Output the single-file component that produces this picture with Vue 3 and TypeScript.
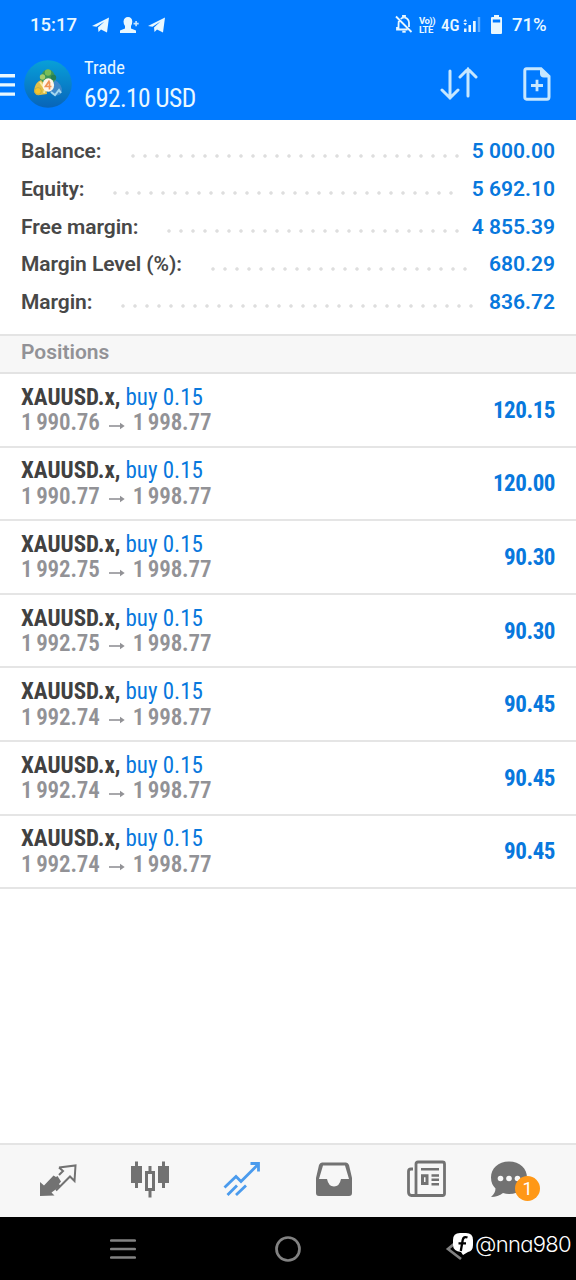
<script setup lang="ts">
type AccountRow = {
  label: string;
  value: string;
  dots: number;
};

type Position = {
  symbol: string;
  side: string;
  open: string;
  current: string;
  profit: string;
};

const DOT_STEP = 12;

const account: AccountRow[] = [
  { label: "Balance:", value: "5 000.00", dots: 28 },
  { label: "Equity:", value: "5 692.10", dots: 29 },
  { label: "Free margin:", value: "4 855.39", dots: 25 },
  { label: "Margin Level (%):", value: "680.29", dots: 22 },
  { label: "Margin:", value: "836.72", dots: 30 },
];

const makePosition = (open: string, profit: string): Position => ({
  symbol: "XAUUSD.x,",
  side: "buy 0.15",
  open,
  current: "1 998.77",
  profit,
});

const positions: Position[] = [
  makePosition("1 990.76", "120.15"),
  makePosition("1 990.77", "120.00"),
  makePosition("1 992.75", "90.30"),
  makePosition("1 992.75", "90.30"),
  makePosition("1 992.74", "90.45"),
  makePosition("1 992.74", "90.45"),
  makePosition("1 992.74", "90.45"),
];
</script>

<template>
  <div class="screen">
    <header class="top">
      <div class="status">
        <span class="clock">15:17</span>
        <svg class="status-left" width="76" height="18" viewBox="0 0 76 18">
          <path d="M0 10 17 1.5 15 16.5 9 13.5 6.5 16 6 11.5 12.5 5.5 4.5 10.8Z" />
          <path d="M28 17V14.5L33 12.5V10Q31.5 8 31.5 5.5 32 1 36 1 40 1 40.3 5.5 40.3 8 39 10V12.5L44 14.5V17Z" />
          <path d="M41.5 6.8H43.3V5H44.9V6.8H46.7V8.4H44.9V10.2H43.3V8.4H41.5Z" opacity=".85" />
          <path d="M56 10 73 1.5 71 16.5 65 13.5 62.5 16 62 11.5 68.5 5.5 60.5 10.8Z" />
        </svg>
        <div class="status-right">
          <svg class="bell" width="18" height="19" viewBox="0 0 18 19" fill="none" stroke="currentColor" stroke-width="1.8">
            <path d="M1 1.5 16.5 17M3.8 6Q3.5 8 3.5 13H2V14.5H12.5M5.8 4Q7 2.7 8 2.6V1H10V2.6Q13.5 3.5 14 7.5V12" />
            <path d="M7.3 16.7H10.7" stroke-width="2" />
          </svg>
          <span class="volte"><b>Vo))</b><b>LTE</b></span>
          <span class="net">4G</span>
          <svg class="signal" width="18" height="17" viewBox="0 0 18 17">
            <path d="M.3 5.5 2.2 3 4.1 5.5ZM.3 7 2.2 9.5 4.1 7ZM1 12.5H3.5V16H1ZM5.5 9H8V16H5.5ZM10 5H12.7V16H10Z" />
            <path d="M14.8 1H17.2V16H14.8Z" opacity=".4" />
          </svg>
          <svg class="battery" width="11" height="19" viewBox="0 0 11 19">
            <path fill-rule="evenodd" d="M3 0H8V2H10Q11 2 11 3V18Q11 19 10 19H1Q0 19 0 18V3Q0 2 1 2H3ZM1.8 4.5V7.5H9.2V4.5Z" />
          </svg>
          <span class="percent">71%</span>
        </div>
      </div>

      <div class="toolbar">
        <svg class="burger" width="15" height="22" viewBox="0 0 15 22">
          <path d="M0 0H15V3.4H0ZM0 9.2H15V12.6H0ZM0 18.4H15V21.8H0Z" />
        </svg>
        <svg class="logo" width="48" height="48" viewBox="0 0 48 48">
          <defs>
            <linearGradient id="sea" x1="0" y1="0" x2="0" y2="1">
              <stop offset="0" stop-color="#08a0d8" />
              <stop offset=".55" stop-color="#087fc8" />
              <stop offset="1" stop-color="#0864b8" />
            </linearGradient>
          </defs>
          <circle cx="24" cy="24" r="23.8" fill="url(#sea)" />
          <path d="M16 20Q17 10 24 9.5 31 10 32 20L28 24H20Z" fill="#3b9657" />
          <circle cx="24" cy="12.5" r="3.2" fill="#78bd58" />
          <circle cx="18.5" cy="17" r="2.7" fill="#a5cc6b" />
          <circle cx="29.5" cy="17.5" r="2.7" fill="#267e53" />
          <path d="M17 20Q11 22 10 31 11 36 16 35L23 34 22 26Z" fill="#e2bf47" />
          <circle cx="14" cy="31" r="3.4" fill="#f4c42e" stroke="#a7a052" stroke-width=".6" />
          <path d="M16 22 21 29 20 33" fill="none" stroke="#f5e99c" stroke-width="2" />
          <path d="M31 20Q38 24 38 31 36 37 29 35L25 31Z" fill="#3f88ca" />
          <path d="M27 32 31 35 35 30 37 33" fill="none" stroke="#a3d7f0" stroke-width="2" />
          <ellipse cx="24.3" cy="25" rx="5.8" ry="6.8" fill="#fff5e8" />
          <path d="M25.5 20.5 21.5 26.5H27.5M25.5 22V29.5" fill="none" stroke="#f09355" stroke-width="1.7" />
        </svg>
        <div class="heading">
          <span class="title">Trade</span>
          <span class="total">692.10 USD</span>
        </div>
        <svg class="sort" width="38" height="34" viewBox="0 0 38 34">
          <path d="M10 4V31M2 23 10 31 18 23M28 29V2M20 10 28 2 36 10" />
        </svg>
        <svg class="new-order" width="28" height="34" viewBox="0 0 28 34">
          <path d="M3.5 1.8H18L26 9.5V30Q26 32.2 24 32.2H3.5Q1.8 32.2 1.8 30V4Q1.8 1.8 3.5 1.8Z" fill="none" stroke="currentColor" stroke-width="3" />
          <path d="M17 1 27 10.5H21Q17 10.5 17 6.5Z" fill="currentColor" />
          <path d="M8 18.5H20M14 12.7V24.3" fill="none" stroke="currentColor" stroke-width="2.8" />
        </svg>
      </div>
    </header>

    <section class="account">
      <div v-for="row in account" :key="row.label" class="account-row">
        <span class="label">{{ row.label }}</span>
        <i class="dots" :style="{ width: `${row.dots * DOT_STEP}px` }"></i>
        <span class="amount">{{ row.value }}</span>
      </div>
    </section>

    <h2 class="section-title">Positions</h2>

    <main class="positions">
      <article v-for="(item, index) in positions" :key="index" class="position">
        <div class="details">
          <div class="deal"><strong>{{ item.symbol }}</strong><span>{{ item.side }}</span></div>
          <div class="prices">
            <span>{{ item.open }}</span>
            <svg width="16" height="8" viewBox="0 0 16 8"><path d="M0 4H13" /><path class="head" d="M11 .8 15.7 4 11 7.2Z" /></svg>
            <span>{{ item.current }}</span>
          </div>
        </div>
        <span class="profit">{{ item.profit }}</span>
      </article>
    </main>

    <nav class="tabs">
      <div class="tab">
        <svg width="40" height="40" viewBox="0 0 40 40">
          <path d="M2 22 6 25.5 15.5 15.5 18 17 19.5 16 23 21.5 21 24 22.5 26 13.5 32.5 16.5 35.5 2 36Z" fill="currentColor" />
          <path d="M21 7.5 37.5 5.5 36.5 21 32 16.5 18 30.5M21 7.5 25 11 21 15" fill="none" stroke="currentColor" stroke-width="2" />
        </svg>
      </div>
      <div class="tab">
        <svg width="40" height="40" viewBox="0 0 40 40">
          <path d="M1 6H5V1.5H8V6H12V23H8V28H5V23H1ZM28 6H32V1.5H35V6H39V23H35V28H32V23H28Z" fill="currentColor" />
          <path d="M16.5 12.5H23.5V29.5H16.5Z" fill="none" stroke="currentColor" stroke-width="3" />
          <path d="M20 6V12M20 30V37.5" stroke="currentColor" stroke-width="3" />
        </svg>
      </div>
      <div class="tab active">
        <svg width="40" height="40" viewBox="0 0 40 40" fill="none" stroke="currentColor" stroke-width="2.8">
          <path d="M2.5 27.5 14 16.5 19 21.5 36 4.5M28.5 3.5H36.5V11.5M5.5 35 15 25.5M14 35 24 25.5" />
        </svg>
      </div>
      <div class="tab inbox">
        <svg width="40" height="40" viewBox="0 0 40 40">
          <path fill-rule="evenodd" d="M8 2.5H32Q34 2.5 35 5L38 18V33Q38 36 35 36H5Q2 36 2 33V18L5 5Q6 2.5 8 2.5ZM9 5.5 5 19H13Q14.5 26.5 20 26.5T27 19H35L31 5.5Z" fill="currentColor" />
        </svg>
      </div>
      <div class="tab">
        <svg width="40" height="40" viewBox="0 0 40 40" fill="none" stroke="currentColor">
          <path d="M9 35.5V4Q9 2 11 2H35.5Q37.5 2 37.5 4V33.5Q37.5 35.5 35.5 35.5H4.5Q1.5 35.5 1.5 32V11.5Q1.5 9 4 9H6" stroke-width="2.8" />
          <path d="M14 9.2H32M24.5 15.5H32M24.5 19.8H32M24.5 24.2H32" stroke-width="2.5" />
          <path d="M15.500 15.8H20V23.5H15.5Z" stroke-width="3" />
        </svg>
      </div>
      <div class="tab chat">
        <svg width="40" height="40" viewBox="0 0 40 40">
          <path d="M19 1.5C30 1.5 37 8.5 37 17.5S30 34 19 34Q16 34 13 33 8 37 1 37 5.5 33 5.5 28.5 1 24 1 17.5C1 8.5 8 1.5 19 1.5Z" fill="currentColor" />
          <g fill="#f7f7f7"><circle cx="10.5" cy="18.5" r="2.8" /><circle cx="19" cy="18.5" r="2.8" /><circle cx="27.5" cy="18.5" r="2.8" /></g>
        </svg>
        <span class="badge">1</span>
      </div>
    </nav>

    <footer class="system-nav">
      <svg class="recent" width="26" height="22" viewBox="0 0 26 22"><path d="M1.3 2.5H24.7M1.3 11H24.7M1.3 19.5H24.7" /></svg>
      <svg class="home" width="28" height="28" viewBox="0 0 28 28"><circle cx="14" cy="14" r="11.5" /></svg>
      <svg class="back" width="18" height="24" viewBox="0 0 18 24"><path d="M15 2 3 12 16 22" /></svg>
      <div class="watermark">
        <svg width="20" height="22" viewBox="0 0 20 22">
          <path d="M7 0H13Q20 0 20 7V12Q20 18 15 19L10 22 8 19Q0 18 0 12V7Q0 0 7 0Z" fill="#fff" />
          <path d="M14.500 4.5Q10.5 3 9.7 7L7.8 18M5.5 10.3H13" fill="none" stroke="#000" stroke-width="2.3" />
        </svg>
        <span>@nna980</span>
      </div>
    </footer>
  </div>
</template>

<style>
body {
  margin: 0;
  background: #fff;
}
</style>

<style scoped>
.screen {
  width: 576px;
  height: 1280px;
  display: flex;
  flex-direction: column;
  overflow: hidden;
  background: #fff;
  font-family: Roboto, "Liberation Sans", sans-serif;
  white-space: nowrap;
}

.screen * {
  box-sizing: border-box;
}

svg {
  display: block;
  flex: none;
}

.top {
  height: 120px;
  flex: none;
  background: #007aff;
  color: #e9f8ff;
}

.status {
  height: 48px;
  display: flex;
  align-items: center;
  padding: 1px 30px 0;
  font-size: 18.5px;
  font-weight: 500;
}

.status svg:not(.bell) {
  fill: currentColor;
}

.clock {
  width: 62px;
}

.status-right {
  margin-left: auto;
  display: flex;
  align-items: center;
}

.bell {
  margin-top: -1px;
}

.volte {
  width: 16px;
  margin-left: 6px;
  display: grid;
  font-size: 9.5px;
  line-height: 9px;
  letter-spacing: -0.5px;
}

.net {
  width: 17px;
  margin-left: 6px;
  font-size: 17px;
  font-stretch: 75%;
}

.signal {
  margin-left: 5px;
}

.battery {
  margin-left: 10px;
}

.percent {
  width: 34px;
  margin-left: 10px;
}

.toolbar {
  height: 72px;
  display: flex;
  align-items: center;
}

.burger {
  margin-top: 2px;
  fill: currentColor;
}

.logo {
  margin-left: 9px;
}

.heading {
  display: grid;
  margin-left: 12px;
  padding-top: 1px;
  font-stretch: 75%;
}

.title {
  font-size: 18.5px;
  line-height: 26px;
}

.total {
  font-size: 25.5px;
  line-height: 34px;
  letter-spacing: -0.6px;
}

.sort {
  margin-left: auto;
  fill: none;
  stroke: #c6e7ff;
  stroke-width: 3;
  stroke-linecap: round;
}

.new-order {
  margin: 0 25px 0 45px;
  color: #c6e7ff;
}

.account {
  height: 213.5px;
  flex: none;
  padding: 12.6px 21px 0;
}

.account-row {
  height: 37.6px;
  display: flex;
  align-items: center;
  font-size: 21px;
  font-weight: 600;
  color: #484848;
}

.label {
  letter-spacing: -0.07px;
}

.dots {
  height: 4px;
  margin: 9px 0 0 25px;
  background: radial-gradient(circle, #dedede 1.3px, transparent 2.2px) 0 0 / 12px 4px;
}

.amount {
  margin-left: auto;
  color: #0878dd;
}

.section-title {
  height: 38.5px;
  flex: none;
  margin: 0;
  padding: 0 21px;
  border-top: 2px solid #e4e4e4;
  background: #f7f7f7;
  color: #929296;
  font-size: 21px;
  font-weight: 600;
  line-height: 33px;
}

.positions {
  flex: 1;
  border-top: 2px solid #e3e3e3;
}

.position {
  height: 73.6px;
  display: flex;
  align-items: center;
  justify-content: space-between;
  padding: 1px 21px 0;
  border-bottom: 2px solid #e5e5e5;
  font-stretch: 75%;
  font-size: 23px;
}

.details {
  line-height: 25.5px;
}

.deal {
  display: flex;
  gap: 5px;
  color: #0878dd;
}

.deal strong {
  color: #414141;
  font-weight: 700;
}

.prices {
  display: flex;
  align-items: center;
  color: #929296;
  font-weight: 600;
  letter-spacing: -0.15px;
  word-spacing: -1.4px;
}

.prices svg {
  margin: 5px 8px 0 9px;
  fill: none;
  stroke: #929296;
  stroke-width: 1.6;
}

.prices .head {
  fill: #929296;
  stroke: none;
}

.profit {
  color: #0878dd;
  font-weight: 700;
  letter-spacing: -0.45px;
}

.tabs {
  height: 74px;
  flex: none;
  display: grid;
  grid-template-columns: repeat(6, 92.2px);
  padding-left: 12px;
  border-top: 2px solid #e4e4e4;
  background: #f7f7f7;
  color: #727272;
}

.tab {
  display: grid;
  place-items: center;
  padding-bottom: 2px;
}

.tab.active {
  color: #4b9bed;
}

.inbox {
  padding-right: 2px;
}

.chat {
  position: relative;
  padding-right: 19px;
}

.badge {
  position: absolute;
  left: 42px;
  top: 31px;
  width: 25px;
  height: 25px;
  border-radius: 50%;
  background: #ff9817;
  color: #fff;
  font-size: 18px;
  line-height: 26px;
  text-align: center;
}

.system-nav {
  position: relative;
  height: 63px;
  flex: none;
  display: flex;
  align-items: center;
  background: #000;
  fill: none;
  stroke: #828282;
  stroke-width: 2.7;
}

.recent {
  margin-left: 110px;
  stroke-linecap: round;
}

.home {
  margin-left: 138px;
}

.back {
  margin-left: 143px;
}

.watermark {
  position: absolute;
  left: 453px;
  top: 13px;
  display: flex;
  align-items: center;
  gap: 2px;
  stroke: none;
  color: #fff;
  font-family: Inter, Lato, sans-serif;
  font-size: 22px;
  font-weight: 300;
  line-height: 28px;
  letter-spacing: -0.7px;
  font-feature-settings: "cv11";
}
</style>
